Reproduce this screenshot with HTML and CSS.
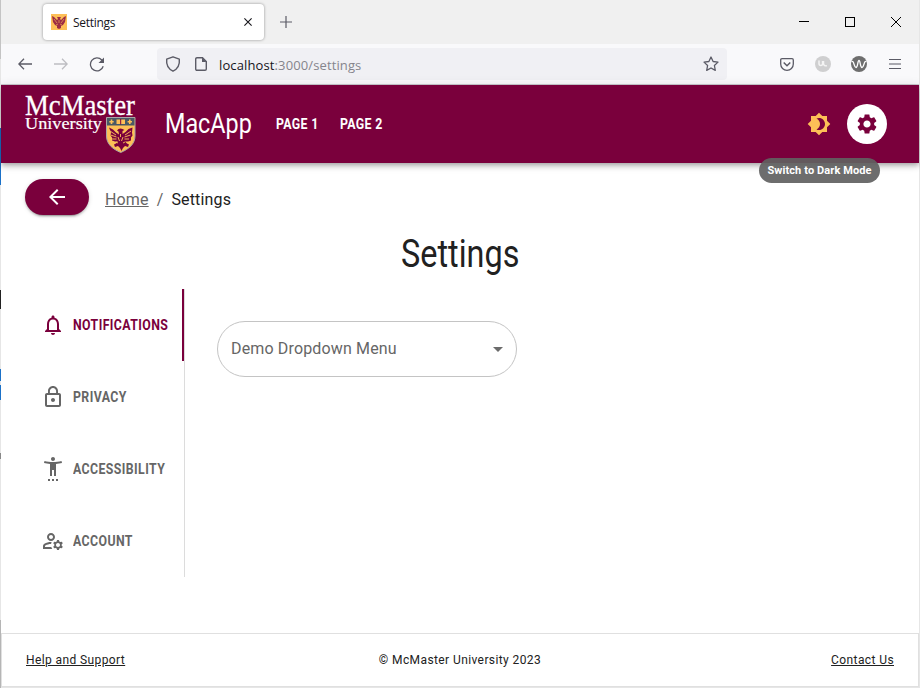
FILE: index.html
```html
<!DOCTYPE html>
<html lang="en">
<head>
<meta charset="utf-8">
<title>Settings</title>
<link rel="stylesheet" href="styles.css">
</head>
<body>
<div class="desk">
<div class="window">
  <div class="titlebar">
    <div class="tab">
      <svg class="favicon" viewBox="0 0 16 16"><rect width="16" height="16" fill="#fdbf57"/><path d="M1 2l2 1 3 3 1-1-1-2h4L9 5l1 1 3-3 2-1-1 6-2 3-2 1v2l-2 1-2-1v-2l-2-1-2-3z" fill="#9c2b44"/><path d="M3 5l3 4M13 5l-3 4M5 11l2-1M11 11l-2-1M8 6v3" stroke="#fdbf57" stroke-width=".6"/></svg>
      <span class="tab-title">Settings</span>
      <svg class="tab-close" viewBox="0 0 8 8"><path d="M.4.4l7.2 7.2M7.6.4L.4 7.6" stroke="#15141a" stroke-width="1.1"/></svg>
    </div>
    <svg class="newtab" viewBox="0 0 12 12"><path d="M6 0v12M0 6h12" stroke="#5b5b66" stroke-width="1.2"/></svg>
    <div class="controls">
      <svg width="10" height="10"><path d="M0 4.5h10" stroke="#000"/></svg>
      <svg width="10" height="10"><rect x=".5" y=".5" width="9" height="9" fill="none" stroke="#000"/></svg>
      <svg width="10" height="10"><path d="M0 0l10 10M10 0L0 10" stroke="#000"/></svg>
    </div>
  </div>
  <div class="toolbar">
    <svg class="back" viewBox="0 0 14 12"><path d="M14 6H1M6 .8L.8 6 6 11.2" fill="none" stroke="#5b5b66" stroke-width="1.3"/></svg>
    <svg class="forward" viewBox="0 0 14 12"><path d="M0 6h13M8 .8L13.2 6 8 11.2" fill="none" stroke="#bdbdc2" stroke-width="1.3"/></svg>
    <svg class="reload" viewBox="0 0 16 16"><path d="M14.200 10.200A6.500 6.500 0 1 1 12.800 4L14 5" fill="none" stroke="#5b5b66" stroke-width="1.3"/><path d="M15 1.500v5.500H9.500z" fill="#5b5b66"/></svg>
    <div class="urlbar">
      <svg class="shield" viewBox="0 0 16 16"><path d="M8 .8l6.3 2.4c.6 5.400-1.300 9.600-6.300 12C3 12.800 1.100 8.600 1.700 3.200z" fill="none" stroke="#5b5b66" stroke-width="1.4" stroke-linejoin="round"/></svg>
      <svg class="page-icon" viewBox="0 0 12 14"><path d="M.7 2c0-.8.500-1.300 1.300-1.300h5.500l3.800 3.800V12c0 .8-.5 1.300-1.300 1.300H2c-.8 0-1.300-.5-1.300-1.300z" fill="none" stroke="#5b5b66" stroke-width="1.400"/><path d="M7 .5V5h4.500z" fill="#5b5b66"/></svg>
      <span class="url"><b>localhost</b>:3000/settings</span>
      <svg class="star" viewBox="0 0 16 16"><path d="M8 1l2.100 4.500 4.900.6-3.600 3.400.9 4.900L8 12l-4.300 2.400.9-4.900L1 6.100l4.900-.6z" fill="none" stroke="#5b5b66" stroke-width="1.300" stroke-linejoin="round"/></svg>
    </div>
    <div class="extensions">
      <svg width="14" height="13" viewBox="0 0 14 13"><path d="M2 .7h10c.8 0 1.300.5 1.300 1.300v4c0 3.500-2.800 6.300-6.300 6.300S.7 9.500.7 6V2C.7 1.200 1.200.7 2 .7z" fill="none" stroke="#5b5b66" stroke-width="1.300"/><path d="M3.700 4.500L7 7.700l3.300-3.200" fill="none" stroke="#5b5b66" stroke-width="1.500"/></svg>
      <svg width="16" height="16" viewBox="0 0 16 16"><circle cx="8" cy="8" r="8" fill="#cfcfd0"/><path d="M4 4.500v3q0 2 1.800 2t1.800-2V5M8.500 5v2.500q0 2.800 3.500 2.300" fill="none" stroke="#f4f4f4" stroke-width="1.500"/></svg>
      <svg width="16" height="16" viewBox="0 0 16 16"><circle cx="8" cy="8" r="8" fill="#6e6e6e"/><path d="M.5 5.500C3 4 3 11.500 5 11.500S6.500 4.500 8 4.500s1 7 3 7S13 4 15.500 5.500" fill="none" stroke="#fff" stroke-width="1.300"/></svg>
      <svg width="12" height="10" viewBox="0 0 12 10"><path d="M0 .5h12M0 5h12M0 9.500h12" stroke="#5b5b66" stroke-width="1.100"/></svg>
    </div>
  </div>

  <header class="appbar">
    <svg class="logo" viewBox="0 0 112 60">
      <text x="0" y="20.500" class="logo-top" textLength="110" lengthAdjust="spacingAndGlyphs">McMaster</text>
      <text x="0" y="35.300" class="logo-bottom" textLength="77" lengthAdjust="spacingAndGlyphs">University</text>
      <path d="M81.500 23.500h28.500V42c0 8-6 13-14.300 16.500C87.500 55 81.500 50 81.500 42z" fill="#fdbf57" stroke="#a9a7a8"/>
      <path d="M82 24h27.500v7.500H82z" fill="#495965"/>
      <path d="M86.500 25.500v4.500M84.300 27.700h4.400M104.800 25.500v4.500M102.600 27.700h4.400" stroke="#fdbf57" stroke-width="1.600"/>
      <path d="M91.500 25.500h8.500v4.500h-8.500z" fill="#fdbf57"/><path d="M95.700 25v5.500" stroke="#7a003c"/>
      <path d="M84 33.500l4 2 3 3 3 2-.5-3-1.500-1 1.500-1.500 2-.5 2 .5 2 1-2 1v3l3-2 3-3 4-1.500-.5 5 .5 3-1.500 2v3l-3 1-3 0 2 2 2 1-1 2.500-3-1-2 2-1.500 3-1.500-3-2-2-3 1-1-2.500 2-1 2-2-3 0-3-1 0-3-1.500-2 .5-3z" fill="#7a003c"/>
      <path d="M85 37l6 4M85.500 41l6 2M87 45l4.500 0M106 37l-6 4M105.500 41l-6 2M104 45l-4.500 0M93 43l1.500 4M98 43l-1.500 4M91 48l2 1M100 48l-2 1M95.500 40v3" stroke="#fdbf57" stroke-width=".9"/>
    </svg>
    <span class="brand"><span class="cond">MacApp</span></span>
    <nav class="pages"><a><span class="cond">PAGE 1</span></a><a><span class="cond">PAGE 2</span></a></nav>
    <div class="mode">
      <svg width="24" height="24" viewBox="0 0 24 24" fill="#fdbf57"><path d="M20 8.690V4h-4.690L12 .69 8.690 4H4v4.690L.69 12 4 15.310V20h4.690L12 23.310 15.310 20H20v-4.690L23.310 12zM12 18c-.89 0-1.740-.2-2.500-.55C11.560 16.500 13 14.420 13 12s-1.440-4.500-3.500-5.450C10.260 6.200 11.110 6 12 6c3.310 0 6 2.690 6 6s-2.690 6-6 6"/></svg>
      <span class="tooltip">Switch to Dark Mode</span>
    </div>
    <div class="gear"><svg width="24" height="24" viewBox="0 0 24 24" fill="#7a003c"><path d="M19.140 12.940c.04-.3.060-.61.060-.94 0-.32-.02-.64-.07-.94l2.030-1.580c.18-.14.230-.41.120-.61l-1.920-3.320c-.12-.22-.37-.29-.59-.22l-2.390.96c-.5-.38-1.030-.7-1.620-.94l-.36-2.540c-.04-.24-.24-.41-.48-.41h-3.840c-.24 0-.43.170-.47.410l-.36 2.540c-.59.240-1.130.570-1.620.940l-2.390-.96c-.22-.08-.47 0-.59.220L2.740 8.870c-.12.210-.08.470.120.610l2.030 1.580c-.05.300-.09.630-.09.940s.020.640.070.940l-2.030 1.580c-.18.140-.23.410-.12.610l1.920 3.320c.12.220.370.290.590.220l2.390-.96c.5.380 1.030.700 1.620.940l.36 2.540c.05.240.240.410.480.410h3.840c.24 0 .44-.17.470-.41l.36-2.540c.59-.24 1.130-.56 1.620-.94l2.390.96c.22.080.470 0 .59-.22l1.920-3.320c.12-.22.070-.47-.12-.61zM12 15.600c-1.980 0-3.600-1.620-3.600-3.600s1.620-3.600 3.600-3.600 3.600 1.620 3.600 3.600-1.620 3.600-3.600 3.600"/></svg></div>
  </header>

  <div class="crumbs">
    <a class="back-button"><svg width="24" height="24" viewBox="0 0 24 24" fill="#fff"><path d="M20 11H7.830l5.590-5.590L12 4l-8 8 8 8 1.410-1.410L7.830 13H20z"/></svg></a>
    <a class="home">Home</a><span class="slash">/</span><span class="current">Settings</span>
  </div>
  <h1><span class="cond">Settings</span></h1>

  <main>
    <div class="tabs">
      <a class="item active"><svg viewBox="0 0 24 24"><path d="M12 22c1.100 0 2-.9 2-2h-4c0 1.100.900 2 2 2m6-6v-5c0-3.070-1.630-5.640-4.500-6.320V4c0-.83-.67-1.500-1.500-1.500s-1.500.670-1.500 1.500v.68C7.640 5.360 6 7.920 6 11v5l-2 2v1h16v-1zm-2 1H8v-6c0-2.480 1.510-4.500 4-4.500s4 2.020 4 4.500z"/></svg><span class="cond">NOTIFICATIONS</span></a>
      <a class="item"><svg viewBox="0 0 24 24"><path d="M12 17c1.100 0 2-.9 2-2s-.9-2-2-2-2 .9-2 2 .9 2 2 2m6-9h-1V6c0-2.760-2.240-5-5-5S7 3.240 7 6v2H6c-1.100 0-2 .9-2 2v10c0 1.100.900 2 2 2h12c1.100 0 2-.9 2-2V10c0-1.100-.9-2-2-2M8.900 6c0-1.710 1.390-3.100 3.100-3.100s3.100 1.390 3.100 3.100v2H8.900zM18 20H6V10h12z"/></svg><span class="cond">PRIVACY</span></a>
      <a class="item"><svg viewBox="0 0 24 24"><path d="M20.500 4c-2.610.7-5.670 1-8.500 1s-5.890-.3-8.500-1L3 6c1.860.5 4 .83 6 1v12h2v-6h2v6h2V7c2-.17 4.140-.5 6-1zM12 4c1.100 0 2-.9 2-2s-.9-2-2-2-2 .9-2 2 .9 2 2 2M7 24h2v-2H7zm4 0h2v-2h-2zm4 0h2v-2h-2z"/></svg><span class="cond">ACCESSIBILITY</span></a>
      <a class="item"><svg viewBox="0 0 24 24"><path d="M4 18v-.65c0-.34.160-.66.410-.81C6.100 15.530 8.030 15 10 15c.03 0 .05 0 .08.010.1-.7.300-1.370.590-1.980-.22-.02-.44-.03-.67-.03-2.420 0-4.680.670-6.610 1.820-.88.520-1.390 1.500-1.390 2.530V20h9.260c-.42-.6-.75-1.280-.97-2zM10 12c2.210 0 4-1.790 4-4s-1.790-4-4-4-4 1.790-4 4 1.790 4 4 4m0-6c1.100 0 2 .9 2 2s-.9 2-2 2-2-.9-2-2 .9-2 2-2M20.750 16c0-.22-.03-.42-.06-.63l1.140-1.010-1-1.730-1.450.49q-.48-.405-1.080-.63L18 11h-2l-.3 1.490q-.6.225-1.080.63l-1.450-.49-1 1.730 1.140 1.010c-.03.210-.06.410-.06.630s.03.420.06.630l-1.140 1.010 1 1.730 1.450-.49q.48.405 1.080.63L16 21h2l.3-1.490q.6-.225 1.080-.63l1.450.49 1-1.730-1.140-1.010c.03-.21.060-.41.060-.63M17 18c-1.100 0-2-.9-2-2s.9-2 2-2 2 .9 2 2-.9 2-2 2"/></svg><span class="cond">ACCOUNT</span></a>
    </div>
    <div class="select"><span class="select-label">Demo Dropdown Menu</span><svg width="24" height="24" viewBox="0 0 24 24" fill="#6b6b6b"><path d="M7 10l5 5 5-5z"/></svg></div>
  </main>

  <footer><a>Help and Support</a><span>© McMaster University 2023</span><a>Contact Us</a></footer>
</div>
</div>
</body>
</html>
```
FILE: styles.css
```css
* { box-sizing: border-box; }
body { margin: 0; font-family: Roboto, "Liberation Sans", sans-serif; color: #212121; }
svg { display: block; flex: none; }
.desk {
  width: 920px; height: 688px; padding: 0 1px 1px; overflow: hidden;
  background:
    linear-gradient(#c4c4c4, #c4c4c4) 0 0 / 1px 59px no-repeat,
    linear-gradient(#1b71c8, #1b71c8) 0 128px / 1px 57px no-repeat,
    linear-gradient(#222, #222) 0 290px / 1px 19px no-repeat,
    linear-gradient(#1b71c8, #1b71c8) 0 369px / 1px 12px no-repeat,
    linear-gradient(#1b71c8, #1b71c8) 0 385px / 1px 15px no-repeat,
    linear-gradient(#888, #888) 0 453px / 1px 6px no-repeat,
    linear-gradient(#b5b5b5, #b5b5b5) 0 620px / 1px 68px no-repeat,
    #e6e6e6;
}
.window { height: 687px; background: #fff; display: flex; flex-direction: column; }
.titlebar { height: 44px; background: #f0f0f0; display: flex; align-items: center; padding-left: 42px; flex: none; }
.tab { width: 221px; height: 36px; background: #fff; border-radius: 4px; box-shadow: 0 0 3px rgba(0,0,0,.4); display: flex; align-items: center; padding: 0 12px 0 8px; }
.favicon { width: 16px; height: 16px; }
.tab-title { font: 12px "Open Sans", sans-serif; color: #15141a; margin: 1px 0 0 6px; flex: 1; letter-spacing: -.3px; }
.tab-close { width: 8px; height: 8px; }
.newtab { width: 12px; height: 12px; margin-left: 16px; }
.controls { display: flex; gap: 36px; margin-left: auto; margin-right: 18px; }
.toolbar { height: 41px; background: #f9f9fb; border-bottom: 1px solid #ccccd0; display: flex; align-items: center; padding-left: 17px; flex: none; }
.back, .forward { width: 14px; height: 12px; }
.forward { margin-left: 22px; }
.reload { width: 16px; height: 16px; margin-left: 21px; }
.urlbar { width: 570px; height: 32px; border-radius: 4px; background: #f0f0f4; margin-left: 52px; display: flex; align-items: center; padding: 0 8px; }
.shield { width: 16px; height: 16px; }
.page-icon { width: 12px; height: 14px; margin-left: 14px; }
.url { font: 13px "Open Sans", sans-serif; color: #85858c; margin: 2px 0 0 12px; flex: 1; letter-spacing: .12px; }
.url b { font-weight: 400; color: #15141a; }
.star { width: 16px; height: 16px; }
.extensions { margin-left: auto; margin-right: 18px; display: flex; align-items: center; gap: 20px; }
.extensions svg:first-child { margin-right: 1px; }
.extensions svg:last-child { margin-left: 2px; }

.cond { display: inline-block; transform: scaleX(.88); transform-origin: 0 50%; white-space: nowrap; }
.appbar { height: 78px; flex: none; background: #7a003c; display: flex; align-items: center; padding: 0 32px 0 24px; color: #fff; box-shadow: 0 2px 4px -1px rgba(0,0,0,.2), 0 4px 5px rgba(0,0,0,.14), 0 1px 10px rgba(0,0,0,.12); position: relative; }
.logo { width: 112px; height: 60px; overflow: visible; }
.logo text { fill: #fff; font-family: "Liberation Serif", serif; }
.logo-top { font-size: 28.5px; stroke: #fff; stroke-width: .3px; }
.logo-bottom { font-size: 17px; stroke: #fff; stroke-width: .2px; }
.brand { flex: none; width: 110px; padding-left: 28px; font-size: 27px; }
.brand .cond { transform: scaleX(.865); }
.pages { display: flex; gap: 22px; margin-left: 29px; font-size: 14px; font-weight: 700; letter-spacing: .4px; }
.pages a { width: 42px; }
.mode { margin-left: auto; margin-right: 16px; position: relative; }
.tooltip { position: absolute; top: 46px; left: -48px; width: 121px; height: 25px; border-radius: 13px; background: rgba(97,97,97,.92); font-size: 11px; font-weight: 700; line-height: 25px; letter-spacing: .1px; text-align: center; white-space: nowrap; }
.gear { width: 40px; height: 40px; border-radius: 50%; background: #fff; display: flex; align-items: center; justify-content: center; }

.crumbs { display: flex; align-items: center; height: 36px; margin: 16px 24px 0; font-size: 16px; }
.back-button { width: 64px; height: 36px; border-radius: 18px; background: #7a003c; display: flex; align-items: center; justify-content: center; margin-right: 16px; box-shadow: 0 3px 1px -2px rgba(0,0,0,.2), 0 2px 2px rgba(0,0,0,.14), 0 1px 5px rgba(0,0,0,.12); }
.home, .slash, .current { margin-top: 4px; letter-spacing: .15px; }
.home { color: #666; text-decoration: underline; }
.slash { margin-left: 8px; margin-right: 8px; color: #666; }
h1 { margin: 17px 0 0 400px; font-size: 38px; font-weight: 400; line-height: 44px; }
h1 .cond { transform: scaleX(.853); }
main { display: flex; margin-top: 13px; }
.tabs { width: 184px; height: 288px; border-right: 1px solid #dcdcdc; }
.item { height: 72px; display: flex; align-items: center; padding-left: 40px; color: #666; fill: #666; font-size: 14px; font-weight: 700; letter-spacing: .46px; }
.item svg { width: 24px; height: 24px; margin-right: 8px; }
.item.active { color: #7a003c; fill: #7a003c; width: 183px; border-right: 2px solid #7a003c; }
.select { width: 300px; height: 56px; margin: 32px 0 0 32px; border: 1px solid #c4c4c4; border-radius: 28px; display: flex; align-items: center; justify-content: space-between; padding: 0 6px 0 13px; color: #666; font-size: 16px; }
.select-label { margin-bottom: 2px; letter-spacing: .15px; }
footer { margin-top: auto; height: 54px; border: 1px solid #e0e0e0; display: grid; grid-template-columns: 1fr auto 1fr; align-items: center; padding: 0 24px; font-size: 12px; letter-spacing: .4px; }
footer a { text-decoration: underline; }
footer a:last-child { justify-self: end; }
```
